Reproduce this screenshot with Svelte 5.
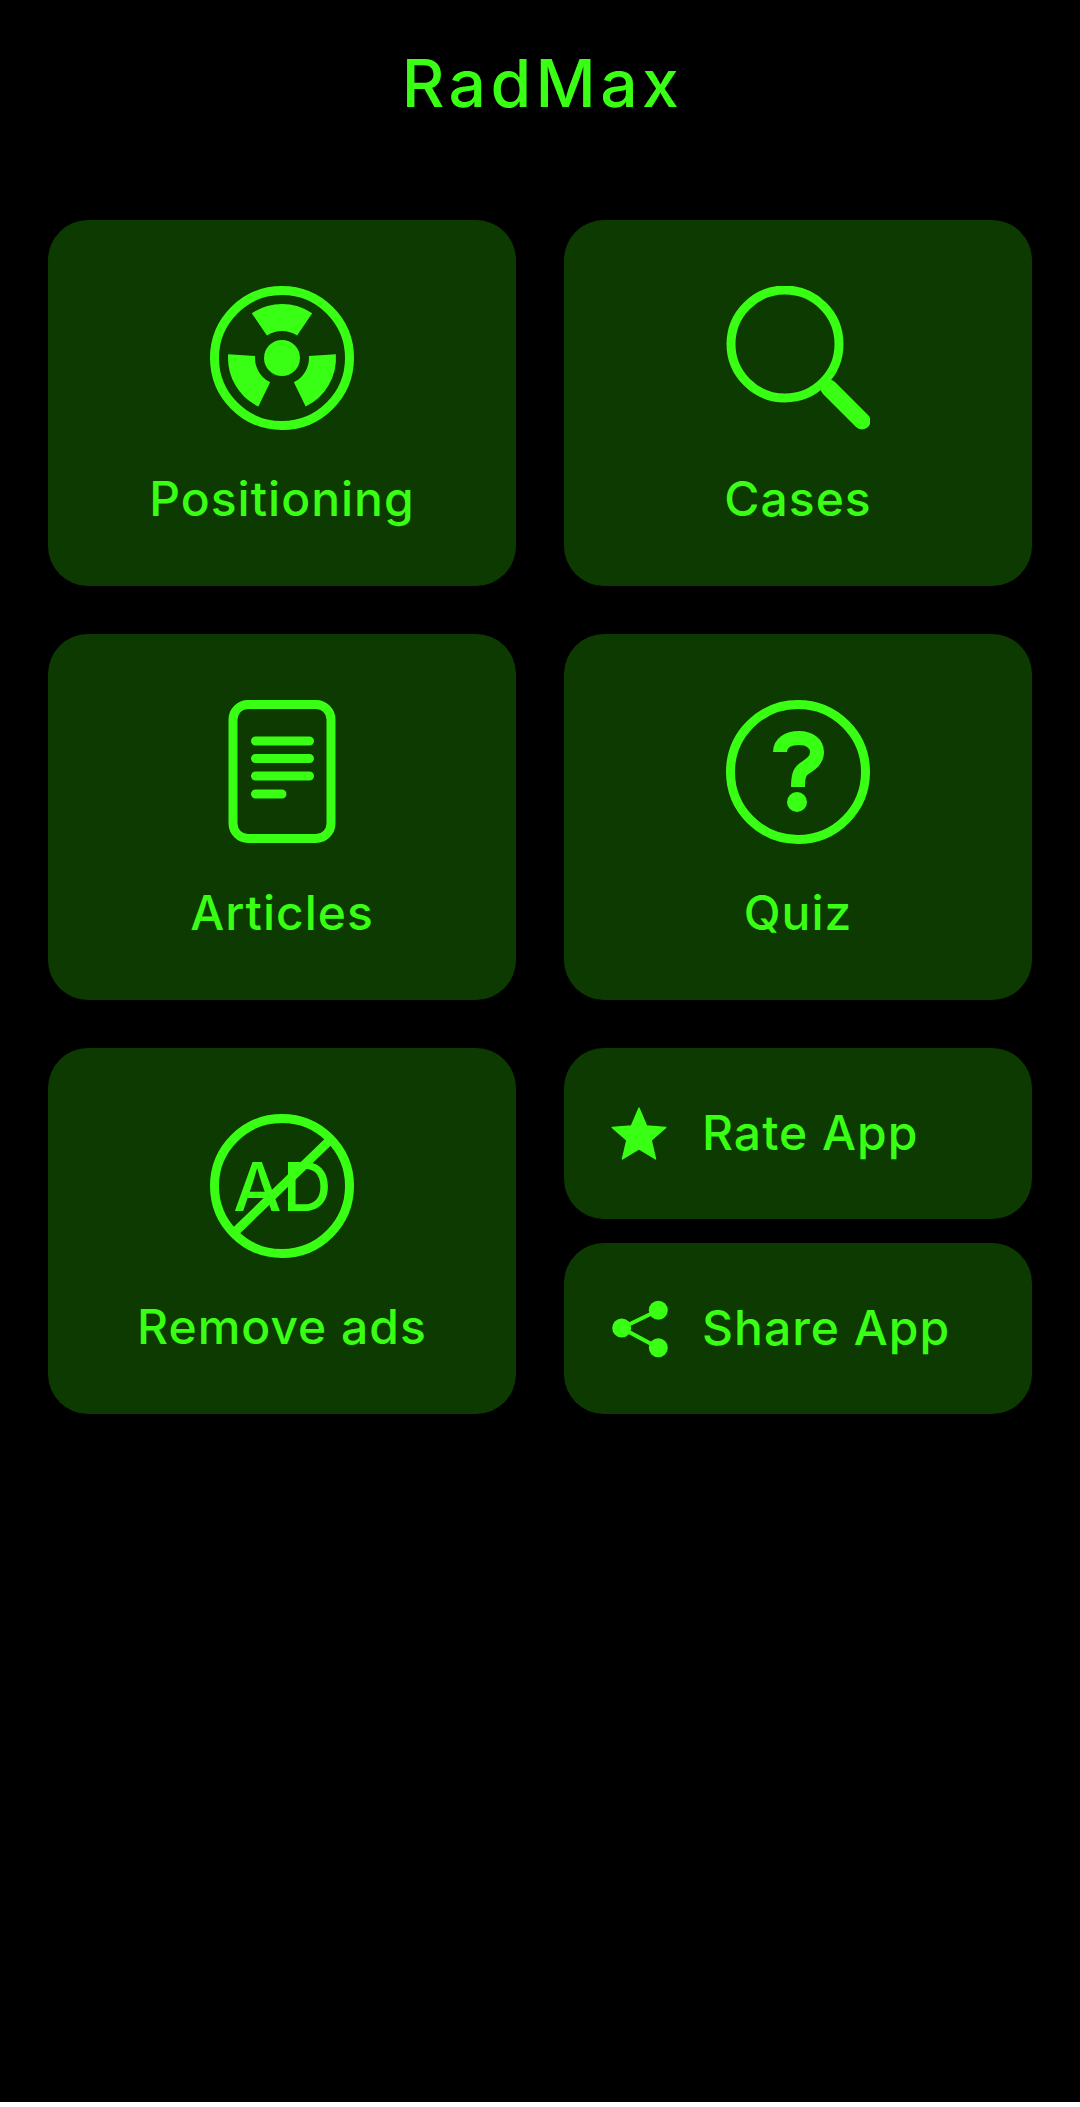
<script>
    const blades = [-90, 30, 150].map((mid) => blade(mid));

    // one wedge of the radiation sign, angles in degrees
    function blade(mid) {
        const spread = 34;
        const inner = 27;
        const outer = 54;
        const p = (r, deg) => {
            const a = (deg * Math.PI) / 180;
            return `${(72 + r * Math.cos(a)).toFixed(2)} ${(72 + r * Math.sin(a)).toFixed(2)}`;
        };
        return `M${p(inner, mid - spread)} L${p(outer, mid - spread)} A${outer} ${outer} 0 0 1 ${p(outer, mid + spread)} L${p(inner, mid + spread)} A${inner} ${inner} 0 0 0 ${p(inner, mid - spread)}Z`;
    }
</script>

<main class="page">
    <h1>RadMax</h1>

    <div class="grid">
        <button class="card">
            <svg class="icon" viewBox="0 0 144 144">
                <circle class="line" cx="72" cy="72" r="67.5" />
                <circle class="solid" cx="72" cy="72" r="18" />
                {#each blades as d}
                    <path class="solid" {d} />
                {/each}
            </svg>
            <span>Positioning</span>
        </button>

        <button class="card">
            <svg class="icon" viewBox="0 0 144 144">
                <circle class="line" cx="59" cy="58" r="54" />
                <path class="line handle" d="M103 102L136 135" />
            </svg>
            <span>Cases</span>
        </button>

        <button class="card">
            <svg class="icon" viewBox="0 0 144 144">
                <rect class="line" x="23" y="4.5" width="98" height="134" rx="15" />
                <path class="line" d="M45.5 41H99.5M45.5 58.5H99.5M45.5 76H99.5M45.5 94H72" />
            </svg>
            <span>Articles</span>
        </button>

        <button class="card">
            <svg class="icon" viewBox="0 0 144 144">
                <circle class="line" cx="72" cy="72" r="67.5" />
                <path class="mark" d="M54 52C54 43 62 38 73 38C84 38 91 44 91 52C91 60 85 64 79 68C74 71 72 75 72 87" />
                <circle class="solid" cx="71" cy="102" r="10" />
            </svg>
            <span>Quiz</span>
        </button>

        <button class="card">
            <svg class="icon" viewBox="0 0 144 144">
                <circle class="line" cx="72" cy="72" r="67.5" />
                <text class="ad" x="73" y="97" text-anchor="middle">AD</text>
                <path class="line" d="M120 26L26 117" />
            </svg>
            <span>Remove ads</span>
        </button>

        <div class="stack">
            <button class="card small">
                <svg class="star" viewBox="2 2 20 19">
                    <path class="solid rounded" d="M12 17.27L18.18 21l-1.64-7.03L22 9.24l-7.19-.61L12 2 9.19 8.63 2 9.24l5.46 4.73L5.82 21z" />
                </svg>
                <span>Rate App</span>
            </button>
            <button class="card small">
                <svg class="share" viewBox="0 0 56 56">
                    <path class="thin" d="M47.3 9.3L10.7 27L47.3 46.7" />
                    <circle class="solid" cx="10.7" cy="27" r="9.5" />
                    <circle class="solid" cx="47.3" cy="9.3" r="9.5" />
                    <circle class="solid" cx="47.3" cy="46.7" r="9.5" />
                </svg>
                <span>Share App</span>
            </button>
        </div>
    </div>
</main>

<style>
    :global(body) {
        background: #fff;
    }

    .page {
        height: 2102px;
        background: #000;
        color: #39ff14;
        font-family: Inter, "Liberation Sans", sans-serif;
        font-weight: 550;
    }

    h1 {
        margin: 0;
        height: 220px;
        padding-top: 43px;
        box-sizing: border-box;
        text-align: center;
        text-indent: 5px;
        font-size: 66px;
        font-weight: 550;
        letter-spacing: 4.4px;
        line-height: 80px;
    }

    .grid {
        display: grid;
        grid-template-columns: 468px 468px;
        grid-auto-rows: 366px;
        gap: 48px;
        padding: 0 48px;
    }

    .card {
        display: flex;
        flex-direction: column;
        align-items: center;
        border: none;
        border-radius: 40px;
        padding: 66px 0 0;
        background: #0c3a01;
        color: inherit;
        font: inherit;
        font-size: 48px;
        letter-spacing: 1px;
        line-height: 58px;
    }

    .icon {
        width: 144px;
        height: 144px;
        margin-bottom: 40px;
    }

    .stack {
        display: flex;
        flex-direction: column;
        gap: 24px;
    }

    .small {
        flex: 1;
        flex-direction: row;
        padding: 0 0 0 48px;
    }

    .small span {
        margin-bottom: 2px;
    }

    .star {
        width: 54px;
        height: 51px;
        margin-right: 36px;
        overflow: visible;
    }

    .share {
        width: 56px;
        height: 56px;
        margin-left: -1px;
        margin-right: 35px;
        overflow: visible;
    }

    .solid {
        fill: #39ff14;
    }

    .rounded {
        stroke: #39ff14;
        stroke-width: 0.5;
        stroke-linejoin: round;
    }

    .line {
        fill: none;
        stroke: #39ff14;
        stroke-width: 9;
        stroke-linecap: round;
    }

    .handle {
        stroke-width: 17;
    }

    .mark {
        fill: none;
        stroke: #39ff14;
        stroke-width: 14;
    }

    .thin {
        fill: none;
        stroke: #39ff14;
        stroke-width: 4;
    }

    .ad {
        fill: #39ff14;
        font-size: 68px;
        font-weight: 500;
        letter-spacing: 1px;
    }
</style>
